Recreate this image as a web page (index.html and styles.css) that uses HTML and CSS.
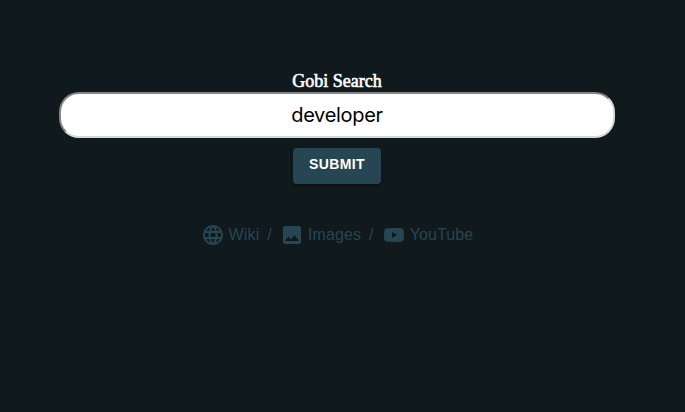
FILE: index.html
```html
<!DOCTYPE html>
<html lang="en">
<head>
<meta charset="utf-8">
<title>Gobi Search</title>
<link rel="stylesheet" href="styles.css">
</head>
<body>
<form class="search">
  <label class="title" for="q">Gobi Search</label>
  <input class="field" id="q" type="text" value="developer">
  <button class="submit" type="button">SUBMIT</button>
</form>
<nav class="links">
  <a class="link"><svg class="icon" viewBox="0 0 24 24"><path d="M11.99 2C6.47 2 2 6.48 2 12s4.47 10 9.99 10C17.52 22 22 17.52 22 12S17.52 2 11.99 2zm6.93 6h-2.95c-.32-1.25-.78-2.45-1.38-3.56 1.84.63 3.37 1.91 4.33 3.56zM12 4.04c.83 1.2 1.48 2.53 1.91 3.96h-3.82c.43-1.43 1.08-2.76 1.91-3.96zM4.26 14C4.1 13.36 4 12.69 4 12s.1-1.36.26-2h3.38c-.08.66-.14 1.32-.14 2s.06 1.34.14 2H4.26zm.82 2h2.95c.32 1.25.78 2.45 1.38 3.56-1.84-.63-3.37-1.9-4.33-3.56zm2.95-8H5.08c.96-1.66 2.49-2.93 4.33-3.56C8.81 5.55 8.35 6.75 8.03 8zM12 19.96c-.83-1.2-1.48-2.53-1.91-3.96h3.82c-.43 1.43-1.08 2.76-1.91 3.96zM14.34 14H9.66c-.09-.66-.16-1.32-.16-2s.07-1.35.16-2h4.68c.09.65.16 1.32.16 2s-.07 1.34-.16 2zm.25 5.56c.6-1.11 1.06-2.31 1.38-3.56h2.95c-.96 1.65-2.49 2.93-4.33 3.56zM16.36 14c.08-.66.14-1.32.14-2s-.06-1.34-.14-2h3.38c.16.64.26 1.31.26 2s-.1 1.36-.26 2h-3.38z"/></svg><span>Wiki</span></a>
  <span class="slash">/</span>
  <a class="link"><svg class="icon" viewBox="0 0 24 24"><path d="M21 19V5c0-1.1-.9-2-2-2H5c-1.1 0-2 .9-2 2v14c0 1.1.9 2 2 2h14c1.1 0 2-.9 2-2zM8.500 13.500l2.500 3.010L14.500 12l4.500 6H5l3.500-4.500z"/></svg><span>Images</span></a>
  <span class="slash">/</span>
  <a class="link"><svg class="icon" viewBox="0 0 24 24"><path d="M10 15l5.190-3L10 9v6m11.560-7.830c.13.47.22 1.100.28 1.900.07.800.1 1.490.1 2.090L22 12c0 2.190-.16 3.800-.44 4.830-.25.900-.83 1.480-1.730 1.730-.47.130-1.330.220-2.650.280-1.300.070-2.490.100-3.590.100L12 19c-4.190 0-6.800-.160-7.830-.440-.900-.250-1.480-.830-1.730-1.730-.130-.470-.220-1.100-.280-1.900-.070-.800-.100-1.490-.100-2.090L2 12c0-2.190.160-3.800.440-4.830.250-.900.830-1.480 1.730-1.730.470-.130 1.330-.220 2.650-.280 1.300-.070 2.490-.100 3.590-.100L12 5c4.190 0 6.800.160 7.830.440.900.250 1.480.830 1.730 1.730z"/></svg><span>YouTube</span></a>
</nav>
</body>
</html>
```
FILE: styles.css
```css
body {
  margin: 0;
  padding: 70px 70px 0 59px;
  height: 342px;
  box-sizing: content-box;
  background: #10191c;
  font-family: "Liberation Sans", Arial, sans-serif;
  overflow: hidden;
}
.search {
  display: flex;
  flex-direction: column;
  align-items: center;
}
.title {
  height: 22px;
  line-height: 22px;
  font-family: "Liberation Serif", serif;
  font-size: 18px;
  -webkit-text-stroke: 0.6px #fff;
  color: #fff;
  white-space: nowrap;
}
.field {
  box-sizing: border-box;
  width: 100%;
  height: 46px;
  padding: 0;
  border: 2px solid;
  border-color: #858585 #d5d9d9 #d5d9d9 #858585;
  border-radius: 20px;
  background: #fff;
  color: #000;
  font: 20px Inter, sans-serif;
  letter-spacing: -0.3px;
  text-align: center;
}
.submit {
  width: 88px;
  height: 36px;
  margin-top: 10px;
  padding: 0 0 4px;
  border: 0;
  border-radius: 4px;
  background: #264653;
  box-shadow: 0 2px 3px rgba(0, 0, 0, 0.35);
  color: #fff;
  font: bold 14px "Liberation Sans", Arial, sans-serif;
  letter-spacing: 0.4px;
}
.links {
  display: flex;
  justify-content: center;
  align-items: center;
  height: 24px;
  margin-top: 39px;
  color: #264653;
  font-size: 16px;
  line-height: 24px;
  letter-spacing: 0.12px;
}
.link {
  display: flex;
  gap: 4px;
}
.icon {
  width: 24px;
  height: 24px;
  fill: currentColor;
}
.slash {
  margin: 0 8px;
}
```
